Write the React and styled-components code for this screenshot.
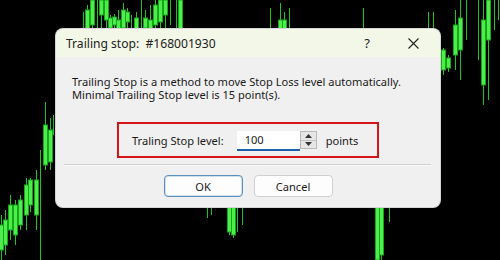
import React from 'react';
import styled, { createGlobalStyle } from 'styled-components';

const GlobalStyle = createGlobalStyle`
  html, body {
    margin: 0;
    padding: 0;
    background: #000;
  }
  * {
    box-sizing: border-box;
  }
`;

// x, wick top, wick bottom, body top, body bottom
const candles = [
  [83, 12, 40], [87, 5, 40, 10, 30], [92, 0, 40, 0, 25], [97, 0, 35], [101, 0, 40, 0, 15],
  [106, 0, 30, 0, 20], [110, 15, 40, 18, 28], [114, 14, 40, 17, 25], [118, 10, 40, 20, 30],
  [123, 3, 40, 10, 28], [127, 8, 40, 12, 22], [131, 15, 40], [136, 12, 40, 18, 30],
  [141, 0, 30], [145, 10, 40, 18, 28], [150, 5, 40, 20, 30], [155, 0, 40, 5, 25],
  [160, 0, 35, 0, 22], [165, 0, 30, 0, 15], [170, 0, 25], [176, 0, 30], [180, 0, 40, 0, 30],
  [270, 8, 40], [280, 3, 40, 20, 30], [284, 12, 40, 20, 30], [289, 8, 40],
  [363, 8, 40], [428, 12, 40], [433, 12, 40],
  [443, 48, 75, 50, 70], [448, 55, 72, 58, 68], [455, 10, 70, 25, 55], [460, 0, 80, 18, 50],
  [466, 0, 40], [478, 0, 60], [483, 0, 105, 20, 85], [488, 0, 100, 0, 40], [494, 0, 30], [498, 0, 20],
  [45, 102, 170, 125, 165], [50, 118, 170, 130, 162], [53, 115, 135], [40, 150, 260],
  [36, 170, 230, 180, 215], [30, 178, 212, 180, 205], [26, 178, 230, 185, 215],
  [20, 195, 230, 200, 225], [15, 200, 245, 205, 235], [10, 195, 240, 205, 230],
  [5, 210, 255, 220, 245], [1, 215, 260, 225, 250],
  [207, 200, 218], [211, 200, 215], [229, 200, 235, 200, 232], [233, 200, 238, 200, 235],
  [237, 200, 232], [242, 200, 225], [377, 200, 260, 200, 260], [381, 200, 260, 200, 255],
  [389, 200, 222],
];

function Chart() {
  return (
    <ChartSvg width="500" height="260" viewBox="0 0 500 260">
      {candles.map(([x, t, b, bt, bb], i) => (
        <g key={i}>
          <rect x={x} y={t} width="1" height={b - t} fill="#1cc41c" />
          {bt !== undefined && (
            <rect x={x - 1.5} y={bt} width="4" height={bb - bt} fill="#4fec4f" stroke="#14a814" strokeWidth="1" />
          )}
        </g>
      ))}
    </ChartSvg>
  );
}

export default function App() {
  return (
    <Screen>
      <GlobalStyle />
      <Chart />
      <Dialog>
        <TitleBar>
          <Title>Trailing stop:&nbsp; #168001930</Title>
          <TitleButtons>
            <Help>?</Help>
            <svg width="11" height="11" viewBox="0 0 11 11">
              <path d="M0.5 0.5 L10.5 10.5 M10.5 0.5 L0.5 10.5" stroke="#222" strokeWidth="1.1" />
            </svg>
          </TitleButtons>
        </TitleBar>
        <Body>
          <Description>
            <Line>Trailing Stop is a method to move Stop Loss level automatically.</Line>
            <Line>Minimal Trailing Stop level is 15 point(s).</Line>
          </Description>
          <Frame>
            <Label>Traling Stop level:</Label>
            <Input>100</Input>
            <Spinner>
              <SpinButton>
                <svg width="7" height="4" viewBox="0 0 7 4"><path d="M0 4 L3.5 0 L7 4 Z" fill="#333" /></svg>
              </SpinButton>
              <SpinButton>
                <svg width="7" height="4" viewBox="0 0 7 4"><path d="M0 0 L3.5 4 L7 0 Z" fill="#333" /></svg>
              </SpinButton>
            </Spinner>
            <Label $gap>points</Label>
          </Frame>
          <Separator />
          <Buttons>
            <Button $primary>OK</Button>
            <Button>Cancel</Button>
          </Buttons>
        </Body>
      </Dialog>
    </Screen>
  );
}

const Screen = styled.div`
  position: relative;
  width: 500px;
  height: 260px;
  overflow: hidden;
  background: #000;
  padding: 29px 0 0 56px;
  font-family: 'Noto Sans', 'Open Sans', sans-serif;
  color: #1a1a1a;
`;

const ChartSvg = styled.svg`
  position: absolute;
  left: 0;
  top: 0;
`;

const Dialog = styled.div`
  position: relative;
  width: 384px;
  height: 178px;
  border-radius: 7px;
  background: #f0f0f0;
  overflow: hidden;
  display: flex;
  flex-direction: column;
  box-shadow: 0 0 0 1px #d6d6d6;
`;

const TitleBar = styled.div`
  height: 33px;
  background: #f3f7e8;
  display: flex;
  align-items: center;
  justify-content: space-between;
  padding: 0 21px 0 10px;
`;

const Title = styled.div`
  font-size: 12.1px;
  color: #222;
`;

const TitleButtons = styled.div`
  display: flex;
  align-items: center;
  gap: 38px;
`;

const Help = styled.span`
  font-size: 13px;
  color: #222;
`;

const Body = styled.div`
  flex: 1;
  display: flex;
  flex-direction: column;
  padding: 18px 0 10px;
`;

const Description = styled.div`
  padding-left: 16px;
  display: flex;
  flex-direction: column;
`;

const Line = styled.div`
  font-size: 11.1px;
  line-height: 13px;
  height: 13px;
  color: #1a1a1a;
  white-space: nowrap;
`;

const Frame = styled.div`
  align-self: center;
  margin-top: 21px;
  width: 262px;
  height: 36px;
  border: 2px solid #d8141a;
  display: flex;
  align-items: center;
  padding-left: 13px;
`;

const Label = styled.span`
  font-size: 11.1px;
  color: #1a1a1a;
  margin-left: ${(p) => (p.$gap ? '9px' : '0')};
  margin-right: ${(p) => (p.$gap ? '0' : '13px')};
`;

const Input = styled.div`
  width: 63px;
  height: 20px;
  background: #fff;
  border-bottom: 2px solid #1b5fae;
  font-size: 11.1px;
  line-height: 18px;
  padding-left: 8px;
  margin-top: 1px;
`;

const Spinner = styled.div`
  width: 17px;
  height: 18px;
  display: flex;
  flex-direction: column;
  border: 1px solid #b9b9b9;
  background: #e6e6e6;
`;

const SpinButton = styled.div`
  flex: 1;
  display: flex;
  align-items: center;
  justify-content: center;
  & + & {
    border-top: 1px solid #c4c4c4;
  }
`;

const Separator = styled.div`
  margin: 6px 9px 0 8px;
  height: 2px;
  border-top: 1px solid #cfcfcf;
  border-bottom: 1px solid #fbfbfb;
`;

const Buttons = styled.div`
  display: flex;
  justify-content: center;
  gap: 11px;
  margin-top: 9px;
`;

const Button = styled.div`
  width: 79px;
  height: 22px;
  border-radius: 4px;
  background: #fdfdfd;
  border: 1px solid ${(p) => (p.$primary ? '#5b8fbd' : '#d0d0d0')};
  box-shadow: ${(p) => (p.$primary ? 'inset 0 0 0 1px #cfe0ef' : 'none')};
  display: flex;
  align-items: center;
  justify-content: center;
  font-size: 11.1px;
  color: #1a1a1a;
`;
